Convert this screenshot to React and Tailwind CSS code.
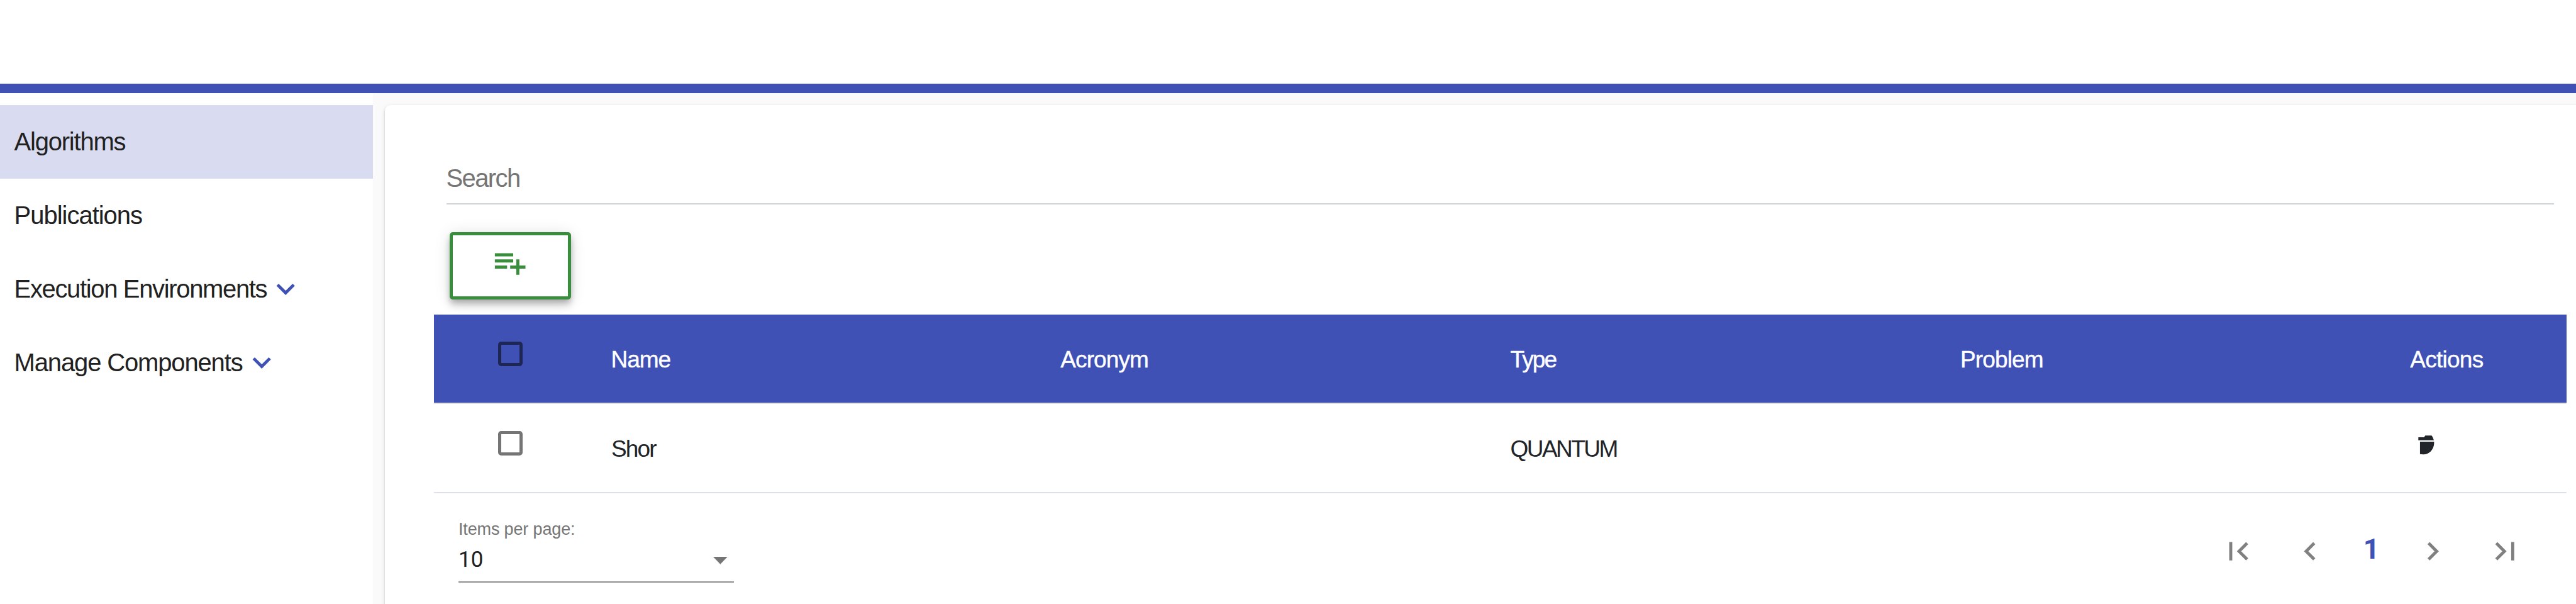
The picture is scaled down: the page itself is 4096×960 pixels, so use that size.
const ICONS = {
  expandMore: "M16.59 8.59L12 13.17 7.41 8.59 6 10l6 6 6-6z",
  playlistAdd:
    "M14 10H2v2h12v-2zm0-4H2v2h12V6zm4 8v-4h-2v4h-4v2h4v4h2v-4h4v-2h-4zM2 16h8v-2H2v2z",
  firstPage: "M18.41 16.59L13.82 12l4.59-4.59L17 6l-6 6 6 6zM6 6h2v12H6z",
  chevronLeft: "M15.41 7.41L14 6l-6 6 6 6 1.41-1.41L10.83 12z",
  chevronRight: "M10 6L8.59 7.41 13.17 12l-4.58 4.59L10 18l6-6z",
  lastPage: "M5.59 7.41L10.18 12l-4.59 4.59L7 18l6-6-6-6zM16 6h2v12h-2z",
};

function Icon({ name, className = "" }) {
  return (
    <svg
      viewBox="0 0 24 24"
      fill="currentColor"
      className={`size-[58.4px] shrink-0 ${className}`}
    >
      <path d={ICONS[name]} />
    </svg>
  );
}

function TrashIcon() {
  return (
    <svg
      viewBox="450 660 80 100"
      fill="currentColor"
      className="ml-[12.4px] h-[32.5px] w-[26px] text-[#212529]"
    >
      <path d="M451 672H479L485 664H516Q523 672 527 687H451Z" />
      <path d="M459 694H528V702C527 732 504 756 475 756Q466 756 459 755Z" />
    </svg>
  );
}

const NAV = [
  { label: "Algorithms", active: true, spacing: "tracking-[-1.22px]" },
  { label: "Publications", spacing: "tracking-[-1.02px]" },
  { label: "Execution Environments", expandable: true, spacing: "tracking-[-1.35px]" },
  { label: "Manage Components", expandable: true, spacing: "tracking-[-1.15px]" },
];

function Sidebar() {
  return (
    <nav className="flex w-[593px] shrink-0 flex-col bg-white pt-[19.4px]">
      {NAV.map((item) => (
        <div
          key={item.label}
          className={`flex h-[116.8px] items-center pl-[22.6px] text-[40px] text-[#212121] ${
            item.active ? "bg-[#d9dbf0]" : ""
          }`}
        >
          <span className={`whitespace-nowrap pb-[1px] ${item.spacing}`}>{item.label}</span>
          {item.expandable && (
            <Icon name="expandMore" className="ml-[1px] text-[#3f51b5]" />
          )}
        </div>
      ))}
    </nav>
  );
}

function Checkbox({ className }) {
  return (
    <span className="flex h-full items-center pb-[15.4px] pl-[102.3px]">
      <span className={`size-[39px] rounded-[5px] border-5 ${className}`} />
    </span>
  );
}

const ROW =
  "grid h-[142.1px] grid-cols-[281px_715.3px_715.3px_715.3px_715.3px_1fr] items-center border-b-2 border-[#dee2e6] text-[37px]";

function Table() {
  return (
    <div>
      <div
        className={`${ROW} bg-[#3f51b5] bg-clip-padding text-white [-webkit-text-stroke:0.4px_white]`}
      >
        <Checkbox className="border-[#1e2653]" />
        <span className="pt-[3px] pl-[0.5px] tracking-[-1.04px]">Name</span>
        <span className="pt-[3px] tracking-[-0.9px]">Acronym</span>
        <span className="pt-[3px] tracking-[-1.9px]">Type</span>
        <span className="pt-[3px] tracking-[-0.83px]">Problem</span>
        <span className="pt-[3px] tracking-[-0.72px]">Actions</span>
      </div>
      <div className={`${ROW} text-[#212529]`}>
        <Checkbox className="border-[#757575]" />
        <span className="pt-[3px] pl-[1px] tracking-[-1.9px]">Shor</span>
        <span />
        <span className="pt-[3px] tracking-[-2.57px]">QUANTUM</span>
        <span />
        <span className="flex pb-[10px]">
          <TrashIcon />
        </span>
      </div>
    </div>
  );
}

function Footer() {
  return (
    <div className="flex items-start justify-between">
      <div className="ml-[39px] flex w-[438px] flex-col border-b-2 border-[#8f8f8f] pt-[36.5px]">
        <span className="text-[27px] leading-[40px] tracking-[-0.15px] text-[#757575]">
          Items per page:
        </span>
        <div className="mt-[9.5px] flex h-[54px] items-start justify-between pr-[10.5px]">
          <span className="font-['Roboto',sans-serif] text-[35px] leading-[40px] text-[#212121]">
            10
          </span>
          <svg
            viewBox="0 0 10 5"
            preserveAspectRatio="none"
            className="mt-[15px] h-[11.7px] w-[22.7px]"
          >
            <path d="M0 0h10L5 5z" fill="#757575" />
          </svg>
        </div>
      </div>
      <div className="mr-[68.1px] flex items-center pt-[62.5px] text-[#808080]">
        <Icon name="firstPage" />
        <Icon name="chevronLeft" className="ml-[55.8px]" />
        <span className="ml-[27px] w-[83px] pb-[6px] text-center font-['Roboto',sans-serif] text-[45px] leading-[52px] font-bold text-[#3f51b5]">
          1
        </span>
        <Icon name="chevronRight" className="ml-[27px]" />
        <Icon name="lastPage" className="ml-[56.4px]" />
      </div>
    </div>
  );
}

export default function App() {
  return (
    <div className="flex h-[960px] w-[4096px] flex-col overflow-hidden bg-[#fafafa] font-['Liberation_Sans',Arial,sans-serif]">
      <header className="h-[148px] shrink-0 border-b-15 border-[#3f51b5] bg-white" />
      <div className="flex min-h-0 grow">
        <Sidebar />
        <div className="flex min-w-0 grow overflow-hidden pt-[19.4px] pl-[19px]">
          <main className="-mr-[10px] flex h-[900px] grow flex-col rounded-[9px] bg-white pr-[25.5px] pl-[78px] shadow-[0_5px_2.5px_-2.5px_rgba(0,0,0,0.2),0_2.5px_2.5px_0_rgba(0,0,0,0.14),0_2.5px_7.5px_0_rgba(0,0,0,0.12)]">
            <div className="mx-[19.5px] flex h-[157.6px] items-end border-b-2 border-[#ced4da] pb-[11px]">
              <span className="text-[40px] leading-[58px] tracking-[-1.6px] text-[#757575]">
                Search
              </span>
            </div>
            <button className="mt-[44px] mb-[24.3px] ml-[24.5px] flex h-[107px] w-[193px] shrink-0 items-start justify-center rounded-[5px] border-5 border-[#388e3c] bg-white pt-[14.5px] text-[#388e3c] shadow-[0_5px_10px_-2.5px_rgba(0,0,0,0.2),0_10px_12px_0_rgba(0,0,0,0.14),0_2.5px_24px_0_rgba(0,0,0,0.12)]">
              <Icon name="playlistAdd" />
            </button>
            <Table />
            <Footer />
          </main>
        </div>
      </div>
    </div>
  );
}
